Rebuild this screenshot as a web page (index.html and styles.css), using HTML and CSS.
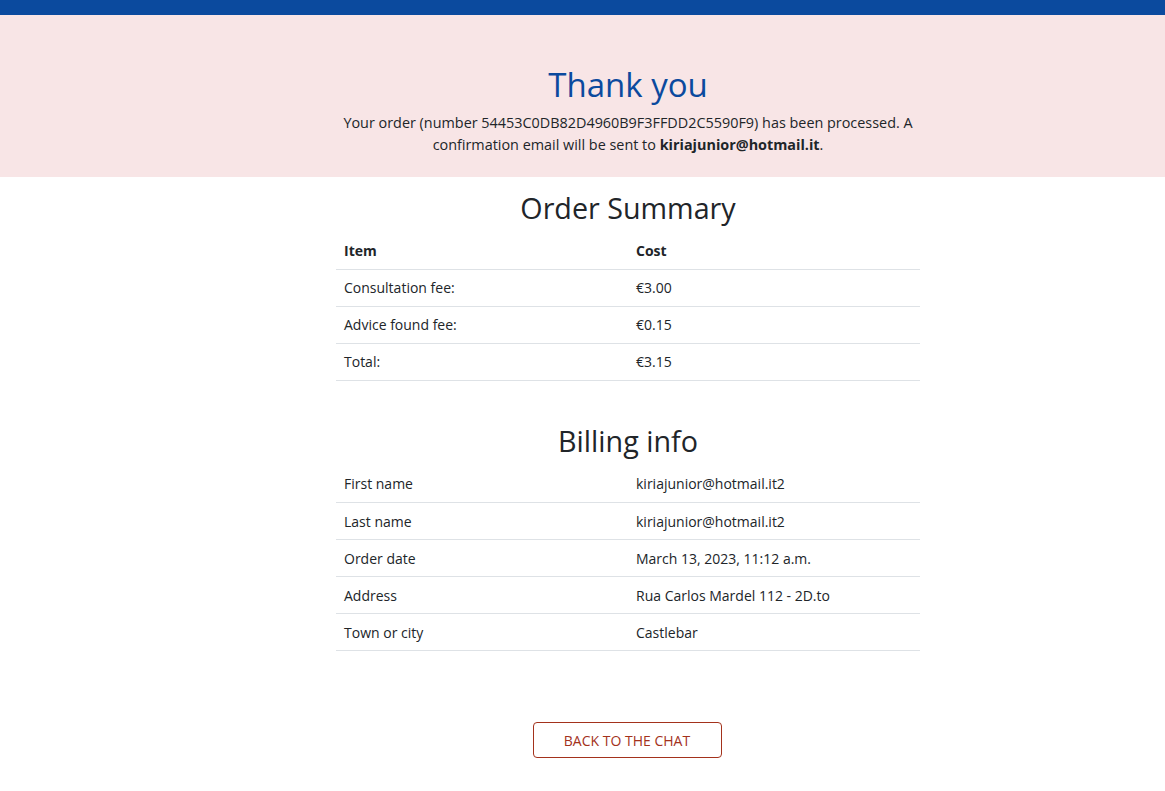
FILE: index.html
```html
<!DOCTYPE html>
<html lang="en">
<head>
<meta charset="utf-8">
<title>Thank you</title>
<link rel="stylesheet" href="styles.css">
</head>
<body>
<div class="topbar"></div>
<section class="hero">
  <div class="hero-inner">
    <h1 class="hero-title">Thank you</h1>
    <p class="hero-text">Your order (number 54453C0DB82D4960B9F3FFDD2C5590F9) has been processed. A confirmation email will be sent to <strong>kiriajunior@hotmail.it</strong>.</p>
  </div>
</section>
<div class="page">
  <main class="content">
    <h2 class="section-title">Order Summary</h2>
    <table class="data-table">
      <thead>
        <tr><th>Item</th><th>Cost</th></tr>
      </thead>
      <tbody>
        <tr><td>Consultation fee:</td><td>€3.00</td></tr>
        <tr><td>Advice found fee:</td><td>€0.15</td></tr>
        <tr><td>Total:</td><td>€3.15</td></tr>
      </tbody>
    </table>
    <h2 class="section-title billing-title">Billing info</h2>
    <table class="data-table billing-table">
      <tbody>
        <tr><td>First name</td><td>kiriajunior@hotmail.it2</td></tr>
        <tr><td>Last name</td><td>kiriajunior@hotmail.it2</td></tr>
        <tr><td>Order date</td><td>March 13, 2023, 11:12 a.m.</td></tr>
        <tr><td>Address</td><td>Rua Carlos Mardel 112 - 2D.to</td></tr>
        <tr><td>Town or city</td><td>Castlebar</td></tr>
      </tbody>
    </table>
    <div class="actions">
      <a class="btn-outline" href="#">Back to the chat</a>
    </div>
  </main>
</div>
</body>
</html>
```
FILE: styles.css
```css
* { box-sizing: border-box; }
html, body { margin: 0; padding: 0; }
body {
  font-family: "Open Sans", "Noto Sans", sans-serif;
  color: #212529;
  background: #fff;
  font-size: 14px;
}
.topbar {
  height: 15px;
  background: #0b4a9e;
}
.hero {
  background: #f8e5e6;
  height: 162px;
  padding-top: 46px;
  padding-left: 91px;
}
.hero-inner {
  text-align: center;
}
.hero-title {
  margin: 0;
  font-size: 33px;
  font-weight: 400;
  line-height: 48px;
  color: #0b4a9e;
}
.hero-text {
  margin: 3px auto 0;
  width: 590px;
  font-size: 14.4px;
  line-height: 21.5px;
}
.hero-text strong { font-weight: 700; }
.page {
  padding-left: 91px;
}
.content {
  width: 584px;
  margin: 0 auto;
}
.section-title {
  margin: 11px 0 0;
  text-align: center;
  font-size: 28.7px;
  font-weight: 400;
  line-height: 40px;
}
.billing-title { margin-top: 40px; }
.data-table {
  width: 100%;
  border-collapse: collapse;
  margin-top: 4px;
}
.billing-table { margin-top: 5px; }
.data-table th,
.data-table td {
  width: 50%;
  text-align: left;
  padding: 0 8px;
  height: 37px;
  vertical-align: middle;
  border-bottom: 1px solid #dee2e6;
  font-size: 14px;
}
.data-table th { font-weight: 700; }
.actions {
  display: flex;
  justify-content: center;
  margin-top: 71px;
  padding-right: 2px;
}
.btn-outline {
  display: inline-flex;
  align-items: center;
  justify-content: center;
  width: 189px;
  height: 36px;
  border: 1px solid #a3321c;
  border-radius: 4px;
  color: #a3321c;
  text-transform: uppercase;
  text-decoration: none;
  font-size: 14px;
}
```
